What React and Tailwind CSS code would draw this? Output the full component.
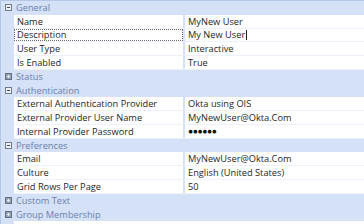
import React from 'react';

const rows = [
  { type: 'cat', label: 'General', open: true },
  { type: 'prop', name: 'Name', value: 'MyNew User' },
  { type: 'prop', name: 'Description', value: 'My New User', focus: true },
  { type: 'prop', name: 'User Type', value: 'Interactive' },
  { type: 'prop', name: 'Is Enabled', value: 'True' },
  { type: 'cat', label: 'Status', open: false },
  { type: 'cat', label: 'Authentication', open: true },
  { type: 'prop', name: 'External Authentication Provider', value: 'Okta using OIS' },
  { type: 'prop', name: 'External Provider User Name', value: 'MyNewUser@Okta.Com' },
  { type: 'prop', name: 'Internal Provider Password', value: '●●●●●●', password: true },
  { type: 'cat', label: 'Preferences', open: true },
  { type: 'prop', name: 'Email', value: 'MyNewUser@Okta.Com' },
  { type: 'prop', name: 'Culture', value: 'English (United States)' },
  { type: 'prop', name: 'Grid Rows Per Page', value: '50' },
  { type: 'cat', label: 'Custom Text', open: false },
  { type: 'cat', label: 'Group Membership', open: false },
];

function ToggleIcon({ open }) {
  return (
    <svg width="7" height="7" viewBox="0 0 7 7" className="shrink-0">
      {open ? (
        <>
          <rect x="0.5" y="0.5" width="6" height="6" fill="#eef1f6" stroke="#6f7b8e" />
          <line x1="2" y1="3.5" x2="5" y2="3.5" stroke="#3d4656" />
        </>
      ) : (
        <>
          <rect x="0.5" y="0.5" width="6" height="6" fill="#98a3b6" stroke="#616e84" />
          <line x1="2" y1="3.5" x2="5" y2="3.5" stroke="#e4e9f2" />
          <line x1="3.5" y1="2" x2="3.5" y2="5" stroke="#e4e9f2" />
        </>
      )}
    </svg>
  );
}

function CategoryRow({ label, open }) {
  return (
    <div className="flex items-center h-[13.75px] bg-[#d5e1f6]">
      <div className="w-[13px] flex justify-end pr-[2px]">
        <ToggleIcon open={open} />
      </div>
      <span className="pl-[2px] text-[#6a82ae]">{label}</span>
    </div>
  );
}

function PropRow({ name, value, focus, password }) {
  return (
    <div className="flex h-[13.75px] bg-[#d5e1f6]">
      <div className="w-[13px] shrink-0" />
      <div className="flex flex-1 bg-white border-b border-[#edf1f9]">
        <div
          className={`w-[169px] shrink-0 flex items-center pl-[3px] text-[#262626] ${
            focus ? 'outline outline-1 outline-dotted outline-[#6b6b6b] -outline-offset-1' : ''
          }`}
        >
          {name}
        </div>
        <div className="w-[2px] shrink-0 bg-[#d5e1f6]" />
        <div className="flex-1 flex items-center pl-[3px] text-[#262626]">
          {password ? (
            <span className="text-[8.5px] tracking-[-0.4px] font-bold text-[#111]">{value}</span>
          ) : (
            <span>{value}</span>
          )}
          {focus && <span className="w-px h-[10px] bg-[#222] ml-[1px]" />}
        </div>
      </div>
    </div>
  );
}

export default function App() {
  return (
    <div
      className="w-[364px] h-[224px] overflow-hidden bg-white border-t border-l border-[#b4c6e9] text-[9.25px] leading-none"
      style={{ fontFamily: '"Open Sans", "Noto Sans", sans-serif' }}
    >
      {rows.map((r, i) =>
        r.type === 'cat' ? (
          <CategoryRow key={i} label={r.label} open={r.open} />
        ) : (
          <PropRow key={i} {...r} />
        )
      )}
      <div className="flex h-[4px] bg-[#d5e1f6]">
        <div className="w-[13px]" />
        <div className="flex-1 bg-white" />
      </div>
    </div>
  );
}
